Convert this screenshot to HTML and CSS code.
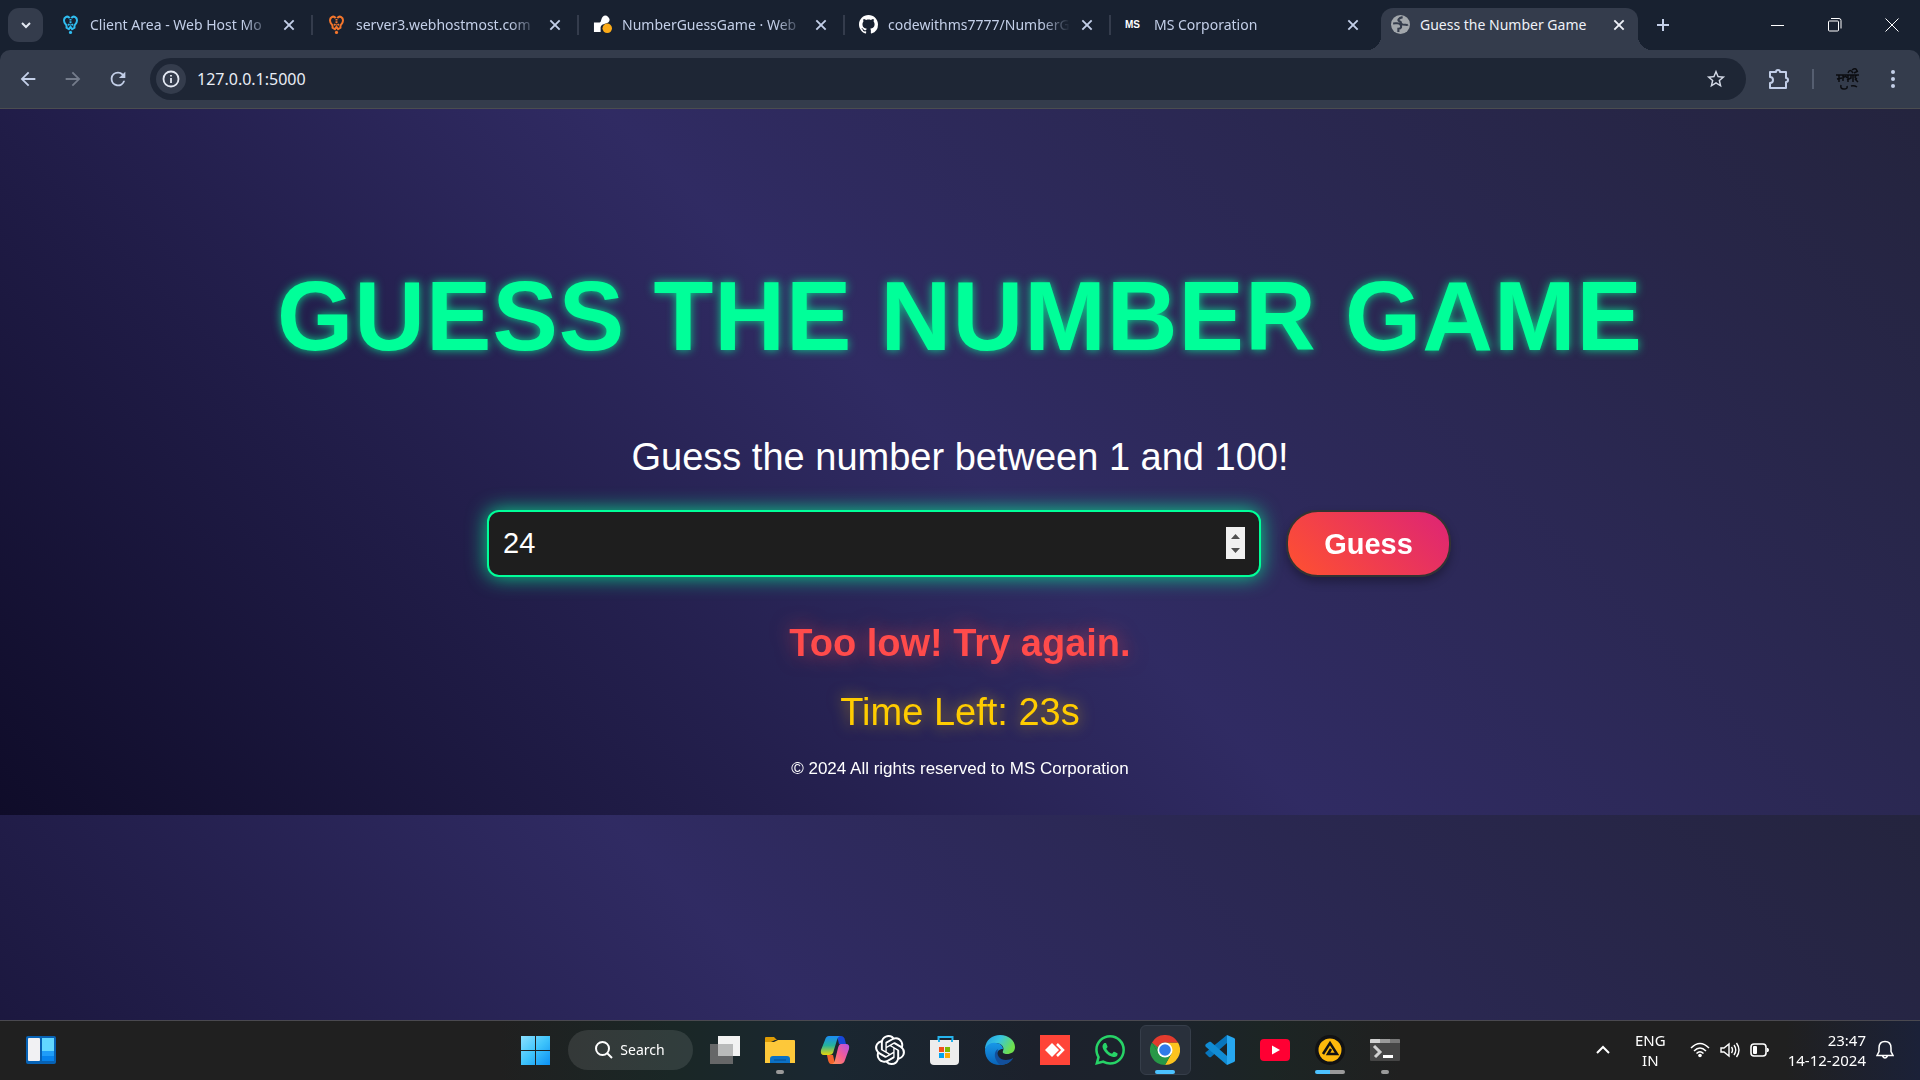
FILE: index.html
```html
<!DOCTYPE html>
<html lang="en">
<head>
<meta charset="utf-8">
<meta name="viewport" content="width=device-width, initial-scale=1">
<title>Guess the Number Game</title>
<link rel="stylesheet" href="styles.css">
</head>
<body>
<div class="desktop">
  <header class="browser">
    <div class="tab-strip">
      <button class="tab-search" type="button" aria-label="Search tabs"><svg width="12" height="12" viewBox="0 0 12 12"><path d="M2 4l4 4 4-4" fill="none" stroke="#e3e8f2" stroke-width="2"/></svg></button>
      <nav class="tabs" aria-label="Open tabs">
        <div class="tab">
          <svg class="favicon cyan" viewBox="0 0 18 24"><g fill="none" stroke="currentColor" stroke-width="2.500"><path d="M8 4C5 0 0 3 1 8c0 3 3 4 3 6v2l3 2 2-3 2 3 3-2v-2c0-2 3-3 3-6 1-5-4-8-7-4"/><path d="M6 13l2-2M12 13l-2-2M9 5v7" stroke-dasharray="2 1"/></g><circle cx="9" cy="22" r="2" fill="currentColor"/></svg>
          <a class="tab-title" href="#client">Client Area - Web Host Mo</a>
          <button class="tab-close" type="button" aria-label="Close tab"><svg viewBox="0 0 12 12"><path d="M2 2l8 8M10 2l-8 8"/></svg></button>
        </div>
        <div class="tab">
          <svg class="favicon orange" viewBox="0 0 18 24"><g fill="none" stroke="currentColor" stroke-width="2.500"><path d="M8 4C5 0 0 3 1 8c0 3 3 4 3 6v2l3 2 2-3 2 3 3-2v-2c0-2 3-3 3-6 1-5-4-8-7-4"/><path d="M6 13l2-2M12 13l-2-2M9 5v7" stroke-dasharray="2 1"/></g><circle cx="9" cy="22" r="2" fill="currentColor"/></svg>
          <a class="tab-title" href="#server">server3.webhostmost.com</a>
          <button class="tab-close" type="button" aria-label="Close tab"><svg viewBox="0 0 12 12"><path d="M2 2l8 8M10 2l-8 8"/></svg></button>
        </div>
        <div class="tab">
          <svg class="favicon" viewBox="0 0 20 20"><path d="M1 8h5c3 0 2-3 4-6a4 4 0 1 1 6 6c-3 2-7 1-8 5v5H1z" fill="#fff"/><circle cx="15" cy="14" r="5" fill="#fbab18"/></svg>
          <a class="tab-title" href="#service">NumberGuessGame · Web</a>
          <button class="tab-close" type="button" aria-label="Close tab"><svg viewBox="0 0 12 12"><path d="M2 2l8 8M10 2l-8 8"/></svg></button>
        </div>
        <div class="tab">
          <svg class="favicon" viewBox="0 0 16 16"><path fill="#fff" d="M8 0C3.58 0 0 3.58 0 8c0 3.54 2.29 6.53 5.47 7.59.4.07.55-.17.55-.38 0-.19-.01-.82-.01-1.49-2.01.37-2.53-.49-2.69-.94-.09-.23-.48-.94-.82-1.13-.28-.15-.68-.52-.01-.53.63-.01 1.08.58 1.23.82.72 1.21 1.87.87 2.33.66.07-.52.28-.87.51-1.07-1.78-.2-3.64-.89-3.64-3.95 0-.87.31-1.59.82-2.15-.08-.2-.36-1.02.08-2.12 0 0 .67-.21 2.2.82.64-.18 1.32-.27 2-.27s1.36.09 2 .27c1.53-1.04 2.2-.82 2.2-.82.44 1.1.16 1.92.08 2.12.51.56.82 1.27.82 2.15 0 3.07-1.87 3.75-3.65 3.95.29.25.54.73.54 1.48 0 1.07-.01 1.93-.01 2.2 0 .21.15.46.55.38A8.01 8.01 0 0 0 16 8c0-4.42-3.58-8-8-8z"/></svg>
          <a class="tab-title" href="#repo">codewithms7777/NumberG</a>
          <button class="tab-close" type="button" aria-label="Close tab"><svg viewBox="0 0 12 12"><path d="M2 2l8 8M10 2l-8 8"/></svg></button>
        </div>
        <div class="tab">
          <span class="favicon ms-mark">MS</span>
          <a class="tab-title" href="#ms">MS Corporation</a>
          <button class="tab-close" type="button" aria-label="Close tab"><svg viewBox="0 0 12 12"><path d="M2 2l8 8M10 2l-8 8"/></svg></button>
        </div>
        <div class="tab active">
          <svg class="favicon" viewBox="0 0 18 18"><circle cx="9" cy="9" r="9" fill="#a2a7ac"/><path d="M11 2c-4 1-5 3-3 4 3 1 0 2 3 3 3 0 4 1 5 0M2 8c3 0 6-1 7 1s1 4-2 4v3" fill="none" stroke="#343c4c" stroke-width="2"/></svg>
          <a class="tab-title" href="#game">Guess the Number Game</a>
          <button class="tab-close" type="button" aria-label="Close tab"><svg viewBox="0 0 12 12"><path d="M2 2l8 8M10 2l-8 8"/></svg></button>
        </div>
      </nav>
      <button class="new-tab" type="button" aria-label="New tab"><svg width="14" height="14" viewBox="0 0 14 14"><path d="M7 1v12M1 7h12" stroke="#c3cfe8" stroke-width="2"/></svg></button>
      <div class="window-controls">
        <button type="button" aria-label="Minimize"><svg width="14" height="14" viewBox="0 0 14 14"><path d="M0 7.5h13" stroke="#fff"/></svg></button>
        <button type="button" aria-label="Restore"><svg width="14" height="14" viewBox="0 0 14 14"><g fill="none" stroke="#fff"><rect x=".5" y="3" width="10" height="10" rx="1"/><path d="M3 .5h8a2 2 0 0 1 2 2v8"/></g></svg></button>
        <button type="button" aria-label="Close"><svg width="14" height="14" viewBox="0 0 14 14"><path d="M.5.5l13 13M13.500 .5l-13 13" stroke="#fff"/></svg></button>
      </div>
    </div>
    <div class="toolbar">
      <div class="nav-buttons">
        <button type="button" aria-label="Back"><svg width="22" height="22" viewBox="0 0 24 24"><path fill="#c3cfe8" d="M20 11H7.83l5.590-5.590L12 4l-8 8 8 8 1.410-1.410L7.830 13H20v-2z"/></svg></button>
        <button type="button" aria-label="Forward" disabled><svg width="22" height="22" viewBox="0 0 24 24"><path fill="#747c8b" d="M4 11h12.170l-5.590-5.590L12 4l8 8-8 8-1.410-1.410L16.170 13H4v-2z"/></svg></button>
        <button type="button" aria-label="Reload"><svg width="22" height="22" viewBox="0 0 24 24"><path fill="#c3cfe8" d="M17.650 6.350A7.960 7.960 0 0 0 12 4a8 8 0 1 0 7.730 10h-2.080A6 6 0 1 1 12 6c1.660 0 3.140.69 4.220 1.780L13 11h7V4l-2.350 2.350z"/></svg></button>
      </div>
      <div class="omnibox">
        <button class="site-info" type="button" aria-label="Site information"><svg width="18" height="18" viewBox="0 0 18 18"><circle cx="9" cy="9" r="7.500" fill="none" stroke="#e3e8f2" stroke-width="1.800"/><path d="M9 8v5M9 5v1.600" stroke="#e3e8f2" stroke-width="1.800"/></svg></button>
        <input class="address" type="text" value="127.0.0.1:5000" aria-label="Address">
        <button class="bookmark" type="button" aria-label="Bookmark"><svg width="22" height="22" viewBox="0 0 24 24"><path fill="#d3d9e6" d="M22 9.240l-7.190-.62L12 2 9.190 8.630 2 9.240l5.460 4.730L5.820 21 12 17.270 18.180 21l-1.630-7.030L22 9.240zM12 15.400l-3.760 2.270 1-4.280-3.320-2.880 4.380-.38L12 6.100l1.710 4.040 4.380.38-3.320 2.880 1 4.280L12 15.400z"/></svg></button>
      </div>
      <div class="toolbar-end">
        <button type="button" aria-label="Extensions"><svg width="22" height="22" viewBox="0 0 22 22"><path d="M2 4h6a2 2 0 0 1 4 0h6v6a2 2 0 0 1 0 4v6H2v-5a3 3 0 0 0 0-6z" fill="none" stroke="#c3cfe8" stroke-width="2" stroke-linejoin="round"/></svg></button>
        <span class="divider"></span>
        <button type="button" aria-label="Profile"><svg width="26" height="24" viewBox="0 0 26 24"><g fill="none" stroke="#0b0c10" stroke-width="1.500"><path d="M1 8h23M4 8v7M2 12l5-1M8 8v6M8 11q3-3 4 0M13 8v7M12 13l4-2v-3M18 8v7M22 8q-4 2 0 4M20 12l3 3M13 6q2-5 5 0M17 3q4-3 5 1M19 6l4-2M6 18q-1 4 3 4t3-3M16 19q3-1 6 1"/></g></svg></button>
        <button type="button" aria-label="Menu"><svg width="6" height="20" viewBox="0 0 6 20"><g fill="#c3cfe8"><circle cx="3" cy="3" r="2"/><circle cx="3" cy="10" r="2"/><circle cx="3" cy="17" r="2"/></g></svg></button>
      </div>
    </div>
  </header>

  <main class="page">
    <h1 class="title">Guess the Number Game</h1>
    <label class="prompt" for="guess">Guess the number between 1 and 100!</label>
    <form class="guess-form">
      <input class="guess-input" id="guess" type="number" min="1" max="100" value="24" autofocus>
      <button class="guess-button" type="button">Guess</button>
    </form>
    <p class="message">Too low! Try again.</p>
    <p class="timer">Time Left: 23s</p>
    <footer class="copyright">© 2024 All rights reserved to MS Corporation</footer>
  </main>

  <footer class="taskbar">
    <div class="task-start">
      <button type="button" aria-label="Widgets"><svg width="30" height="28" viewBox="0 0 30 28"><rect width="30" height="28" rx="2" fill="#0762b5"/><rect x="2" y="2" width="12" height="23" rx="1" fill="#f1f1f3"/><path d="M16 2h12v13H16z" fill="#62d7ff"/><path d="M16 15h12v5H16z" fill="#1f9df8"/><path d="M16 20h12v5H16z" fill="#0783ec"/></svg></button>
    </div>
    <div class="task-apps">
      <button class="app" type="button" aria-label="Start"><svg viewBox="0 0 30 30"><defs><linearGradient id="win" x1="0" y1="0" x2="1" y2="1" ><stop stop-color="#8be0ff"/><stop offset=".5" stop-color="#3fc4fb"/><stop offset="1" stop-color="#0b90f3"/></linearGradient></defs><path fill="url(#win)" d="M1 1h14v14H1zM16 1h14v14H16zM1 16h14v14H1zM16 16h14v14H16z"/></svg></button>
      <button class="search" type="button"><svg width="18" height="18" viewBox="0 0 18 18"><circle cx="7.500" cy="7.500" r="6.500" fill="none" stroke="#fff" stroke-width="2"/><path d="M12 12l5 5" stroke="#fff" stroke-width="2"/></svg>Search</button>
      <button class="app" type="button" aria-label="Task view"><svg viewBox="0 0 30 30"><path d="M0 9h23v20H0z" fill="#666768"/><path d="M8 1h22v20H8z" fill="#f2f2f2"/><path d="M8 9h15v12H8z" fill="#b9baba"/></svg></button>
      <button class="app" type="button" aria-label="File Explorer"><svg viewBox="0 0 30 30"><path d="M0 3a1 1 0 0 1 1-1h8l3 3h-2L0 10z" fill="#dd9b04"/><path d="M0 7h9l4-2h16a1 1 0 0 1 1 1v22H0z" fill="#fdc83a"/><path d="M5 28v-4a3 3 0 0 1 3-3h14a3 3 0 0 1 3 3v4z" fill="#0b71c6"/><path d="M9 25h12" stroke="#064d8e"/></svg><i class="mark"></i></button>
      <button class="app" type="button" aria-label="Copilot"><svg viewBox="0 0 30 30"><defs><linearGradient id="cpa" x1="0" y1="0" x2="0" y2="1"><stop stop-color="#1b8bf5"/><stop offset=".5" stop-color="#26b39b"/><stop offset="1" stop-color="#e9d60b"/></linearGradient><linearGradient id="cpb" x1="1" y1="0" x2="0" y2="1"><stop stop-color="#b052e8"/><stop offset=".5" stop-color="#f45d95"/><stop offset="1" stop-color="#ff9a4d"/></linearGradient></defs><path d="M17 1h4q3 0 4 4l1 4h-7z" fill="#1747d8"/><path d="M9 1h12q-3 0-4 4l-4 13q-1 2-4 2H4q-4 0-3-5L5 5q1-4 4-4z" fill="url(#cpa)"/><path d="M7 20h6l2 9h-4q-2 0-3-4z" fill="#f3642c"/><path d="M21 9h5q4 0 3 5l-4 11q-1 4-5 4h-9q3 0 4-4l3-12q1-4 3-4z" fill="url(#cpb)"/></svg></button>
      <button class="app" type="button" aria-label="ChatGPT"><svg viewBox="0 0 24 24"><path fill="#fff" d="M22.2819 9.8211a5.9847 5.9847 0 0 0-.5157-4.9108 6.0462 6.0462 0 0 0-6.5098-2.9A6.0651 6.0651 0 0 0 4.9807 4.1818a5.9847 5.9847 0 0 0-3.9977 2.9 6.0462 6.0462 0 0 0 .7427 7.0966 5.98 5.98 0 0 0 .511 4.9107 6.051 6.051 0 0 0 6.5146 2.9001A5.9847 5.9847 0 0 0 13.2599 24a6.0557 6.0557 0 0 0 5.7718-4.2058 5.9894 5.9894 0 0 0 3.9977-2.9001 6.0557 6.0557 0 0 0-.7475-7.0729zm-9.022 12.6081a4.4755 4.4755 0 0 1-2.8764-1.0408l.1419-.0804 4.7783-2.7582a.7948.7948 0 0 0 .3927-.6813v-6.7369l2.02 1.1686a.071.071 0 0 1 .038.052v5.5826a4.504 4.504 0 0 1-4.4945 4.4944zm-9.6607-4.1254a4.4708 4.4708 0 0 1-.5346-3.0137l.142.0852 4.783 2.7582a.7712.7712 0 0 0 .7806 0l5.8428-3.3685v2.3324a.0804.0804 0 0 1-.0332.0615L9.74 19.9502a4.4992 4.4992 0 0 1-6.1408-1.6464zM2.3408 7.8956a4.485 4.485 0 0 1 2.3655-1.9728V11.6a.7664.7664 0 0 0 .3879.6765l5.8144 3.3543-2.0201 1.1685a.0757.0757 0 0 1-.071 0l-4.8303-2.7865A4.504 4.504 0 0 1 2.3408 7.872zm16.5963 3.8558L13.1038 8.364 15.1192 7.2a.0757.0757 0 0 1 .071 0l4.8303 2.7913a4.4944 4.4944 0 0 1-.6765 8.1042v-5.6772a.79.79 0 0 0-.407-.667zm2.0107-3.0231l-.142-.0852-4.7735-2.7818a.7759.7759 0 0 0-.7854 0L9.409 9.2297V6.8974a.0662.0662 0 0 1 .0284-.0615l4.8303-2.7866a4.4992 4.4992 0 0 1 6.6802 4.66zM8.3065 12.863l-2.02-1.1638a.0804.0804 0 0 1-.038-.0567V6.0742a4.4992 4.4992 0 0 1 7.3757-3.4537l-.142.0805L8.704 5.459a.7948.7948 0 0 0-.3927.6813zm1.0976-2.3654l2.602-1.4998 2.6069 1.4998v2.9994l-2.5974 1.4997-2.6067-1.4997Z"/></svg></button>
      <button class="app" type="button" aria-label="Microsoft Store"><svg viewBox="0 0 30 30"><path d="M8.500 8V2h14v6" fill="none" stroke="#25b4ee" stroke-width="2"/><path d="M0 5h29v21a4 4 0 0 1-4 4H4a4 4 0 0 1-4-4z" fill="#ededed"/><path d="M8 5h2v2H8zM21 5h2v2h-2z" fill="#25b4ee"/><path d="M9 12h5v5H9z" fill="#f1511b"/><path d="M15 12h5v5h-5z" fill="#80b900"/><path d="M9 18h5v5H9z" fill="#00a3ef"/><path d="M15 18h5v5h-5z" fill="#fbab09"/></svg></button>
      <button class="app" type="button" aria-label="Edge"><svg viewBox="0 0 30 30"><defs><linearGradient id="eda" x1="0" y1="0" x2="1" y2=".4"><stop stop-color="#1f9be6"/><stop offset=".5" stop-color="#38c5e0"/><stop offset="1" stop-color="#6fe04d"/></linearGradient><linearGradient id="edb" x1="0" y1="0" x2="0" y2="1"><stop stop-color="#1898e8"/><stop offset="1" stop-color="#0963b8"/></linearGradient></defs><path d="M0 13C1 5 7 0 15 0c9 0 15 6 15 12 0 5-4 7-8 7-3 0-5-1-4-3 2-4-2-8-7-8-6 0-10 4-11 7z" fill="url(#eda)"/><path d="M0 15C1 10 6 7 11 8c4 0 7 3 7 6-8 0-8 10 1 12 3 1 7-1 9-3-3 5-8 7-13 7C6 30 0 24 0 15z" fill="url(#edb)"/><path d="M13 14c-5 3-4 11 2 16 6 0 11-3 13-7-9 5-18 0-15-9z" fill="#134f9b"/></svg></button>
      <button class="app" type="button" aria-label="AnyDesk"><svg viewBox="0 0 30 30"><path fill="#ff4438" d="M0 0h30v30H0z"/><path d="M12 8l7 7-7 7-7-7z" fill="#fff"/><path d="M17 9l6 6-6 6" fill="none" stroke="#fff" stroke-width="2.500"/></svg></button>
      <button class="app" type="button" aria-label="WhatsApp"><svg viewBox="0 0 24 24"><path fill="#27d367" d="M17.472 14.382c-.297-.149-1.758-.867-2.03-.967-.273-.099-.471-.148-.67.15-.197.297-.767.966-.94 1.164-.173.199-.347.223-.644.075-.297-.15-1.255-.463-2.39-1.475-.883-.788-1.48-1.761-1.653-2.059-.173-.297-.018-.458.13-.606.134-.133.298-.347.446-.52.149-.174.198-.298.298-.497.099-.198.05-.371-.025-.52-.075-.149-.669-1.612-.916-2.207-.242-.579-.487-.5-.669-.51-.173-.008-.371-.01-.57-.01-.198 0-.52.074-.792.372-.272.297-1.04 1.016-1.04 2.479 0 1.462 1.065 2.875 1.213 3.074.149.198 2.096 3.2 5.077 4.487.709.306 1.262.489 1.694.625.712.227 1.36.195 1.871.118.571-.085 1.758-.719 2.006-1.413.248-.694.248-1.289.173-1.413-.074-.124-.272-.198-.57-.347m-5.421 7.403h-.004a9.87 9.87 0 01-5.031-1.378l-.361-.214-3.741.982.998-3.648-.235-.374a9.86 9.86 0 01-1.51-5.26c.001-5.45 4.436-9.884 9.888-9.884 2.64 0 5.122 1.03 6.988 2.898a9.825 9.825 0 012.893 6.994c-.003 5.45-4.437 9.884-9.885 9.884m8.413-18.297A11.815 11.815 0 0012.05 0C5.495 0 .16 5.335.157 11.892c0 2.096.547 4.142 1.588 5.945L.057 24l6.305-1.654a11.882 11.882 0 005.683 1.448h.005c6.554 0 11.89-5.335 11.893-11.893a11.821 11.821 0 00-3.48-8.413z"/></svg></button>
      <button class="app current" type="button" aria-label="Chrome"><svg viewBox="0 0 30 30"><path d="M28 7.500A15 15 0 0 1 15 30l6.500-11.500L15 7.500z" fill="#fcc31e"/><path d="M2 7.500A15 15 0 0 0 15 30l6.500-11.500h-13z" fill="#279847"/><path d="M2 7.500l6.500 11L15 15V7.500z" fill="#279847"/><path d="M2 7.500A15 15 0 0 1 28 7.500H15a7.500 7.500 0 0 0-7 5z" fill="#e33b2e"/><circle cx="15" cy="15" r="7.500" fill="#fff"/><circle cx="15" cy="15" r="5.800" fill="#2f7bea"/></svg><i class="mark wide"></i></button>
      <button class="app" type="button" aria-label="Visual Studio Code"><svg viewBox="0 0 30 30"><path d="M1 19l3 3c1 .5 1.500.3 2 0L22 8V0L1 17c-1 1-1 1 0 2z" fill="#0876bd"/><path d="M1 9l3-2c1-.5 1.500-.3 2 0l16 14v9L1 12c-1-1-1-2 0-3z" fill="#118cd4"/><path d="M22 0l7 3c1 .5 1 1 1 2v20c0 1 0 1.500-1 2l-7 3z" fill="#27a7f0"/></svg></button>
      <button class="app" type="button" aria-label="YouTube"><svg viewBox="0 0 30 30"><rect y="4" width="30" height="22" rx="4" fill="#ff0033"/><path d="M12 10.500v9l8-4.500z" fill="#fff"/></svg></button>
      <button class="app" type="button" aria-label="Audio app"><svg viewBox="0 0 30 30"><circle cx="15" cy="15" r="15" fill="#111214"/><circle cx="15" cy="15" r="11.500" fill="#fdb90c"/><path d="M8 19l7-11 7 11h-9l3-5" fill="none" stroke="#111214" stroke-width="2.500"/></svg><i class="mark split"></i></button>
      <button class="app" type="button" aria-label="Terminal"><svg viewBox="0 0 30 30"><rect y="4" width="30" height="22" rx="1" fill="#454545"/><path d="M0 8V5a1 1 0 0 1 1-1h9v4z" fill="#d0d0d0"/><path d="M10 4h10v4H10z" fill="#9b9b9b"/><path d="M20 4h9a1 1 0 0 1 1 1v3H20z" fill="#777"/><path d="M4 11l6 6-5 5" fill="none" stroke="#cfcfcf" stroke-width="3"/><path d="M13 21.500h10" stroke="#fff" stroke-width="3"/></svg><i class="mark"></i></button>
    </div>
    <div class="tray">
      <button type="button" aria-label="Show hidden icons"><svg width="14" height="10" viewBox="0 0 14 10"><path d="M1 8l6-6 6 6" fill="none" stroke="#fff" stroke-width="2"/></svg></button>
      <span class="language">ENG<br>IN</span>
      <span class="status">
        <svg width="20" height="20" viewBox="0 0 20 20"><g fill="none" stroke="#fff" stroke-width="1.500"><path d="M1 8q9-9 18 0M4 11q6-6 12 0M6.500 13.500q3.500-3.500 7 0"/></g><circle cx="10" cy="15.500" r="1.800" fill="#fff"/></svg>
        <svg width="20" height="20" viewBox="0 0 20 20"><g fill="none" stroke="#fff" stroke-width="1.400"><path d="M1 8v4h3l5 4V4L4 8zM11.500 7q2 3 0 6M14 5q3.500 5 0 10M16.500 3q5 7 0 14"/></g></svg>
        <svg width="20" height="20" viewBox="0 0 20 20"><rect x="1" y="4" width="15" height="12" rx="3" fill="none" stroke="#fff" stroke-width="1.600"/><rect x="3" y="6" width="4" height="8" rx="1" fill="#fff"/><path d="M17 8h1q2 2 0 4h-1z" fill="#fff"/></svg>
      </span>
      <time class="clock" datetime="2024-12-14T23:47">23:47<br>14-12-2024</time>
      <button type="button" aria-label="Notifications"><svg width="18" height="20" viewBox="0 0 18 20"><g fill="none" stroke="#fff" stroke-width="1.500"><path d="M1 15.500l2-4V8q0-6.500 6-6.500T15 8v3.500l2 4zM6.500 16q2.500 4 5 0"/></g></svg></button>
    </div>
  </footer>
</div>
</body>
</html>
```
FILE: styles.css
```css
* { box-sizing: border-box; }
body { margin: 0; font-family: "Liberation Sans", Arial, sans-serif; color: #fff; }
button { margin: 0; padding: 0; border: 0; background: none; color: inherit; font: inherit; display: flex; align-items: center; justify-content: center; }
svg { display: block; flex: none; }
.desktop { display: flex; flex-direction: column; min-height: 100vh; }

/* Browser chrome */
.browser { font-family: "Noto Sans", "Open Sans", sans-serif; background: #182130; border-bottom: 1px solid #4b4d50; }
.tab-strip { display: flex; align-items: center; height: 50px; padding-left: 8px; }
.tab-search { width: 35px; height: 34px; border-radius: 11px; background: #343c4c; flex: none; }
.tabs { display: flex; flex: 0 1 1592px; min-width: 0; height: 50px; margin-left: 3px; }
.tab { position: relative; display: flex; align-items: center; flex: 1 1 0; min-width: 0; height: 42px; margin-top: 8px; padding: 0 16px 9px 15px; color: #c3cfe8; }
.tab::after { content: ""; position: absolute; right: -1px; top: 7px; width: 2px; height: 20px; background: #343c4c; }
.tab.active { flex: 0 0 257px; margin-left: 5px; padding: 0 12px 9px 10px; background: #343c4c; border-radius: 12px 12px 0 0; color: #eef1f8; }
.tab:nth-last-child(2)::after { display: none; }
.tab.active::before, .tab.active::after { content: ""; position: absolute; top: auto; bottom: 0; width: 14px; height: 14px; }
.tab.active::before { left: -14px; background: radial-gradient(circle at 0 0, #182130 14px, #343c4c 14px); }
.tab.active::after { right: -14px; background: radial-gradient(circle at 100% 0, #182130 14px, #343c4c 14px); }
.favicon { width: 19px; height: 19px; flex: none; }
.cyan { color: #30bdf0; }
.orange { color: #f4762c; }
.ms-mark { color: #fff; font: bold 10px/19px "Liberation Sans", Arial, sans-serif; }
.tab-title { flex: 1; min-width: 0; margin: 0 10px; overflow: hidden; white-space: nowrap; color: inherit; text-decoration: none; font-size: 14px; line-height: 20px; mask-image: linear-gradient(to right, #000 calc(100% - 28px), transparent); }
.active .tab-title { mask-image: none; }
.tab-close svg { width: 14px; height: 14px; fill: none; stroke: currentColor; stroke-width: 1.6; }
.new-tab { width: 50px; height: 34px; flex: none; }
.window-controls { display: flex; margin-left: auto; }
.window-controls button { width: 57px; height: 50px; }
.toolbar { display: flex; align-items: center; gap: 10px; height: 58px; padding-right: 5px; background: #343c4c; border-radius: 10px 10px 0 0; }
.nav-buttons { display: flex; padding-left: 5px; }
.nav-buttons button { width: 45px; height: 42px; }
.omnibox { flex: 1; display: flex; align-items: center; height: 42px; padding: 0 19px 0 6px; border-radius: 21px; background: #1e2635; }
.site-info { width: 30px; height: 30px; border-radius: 50%; background: #343c4c; }
.address { flex: 1; min-width: 0; margin-left: 11px; padding: 0; border: 0; outline: 0; background: none; color: #e9edf5; font: 16px/24px "Noto Sans", "Open Sans", sans-serif; }
.toolbar-end { display: flex; align-items: center; }
.toolbar-end button { width: 45px; height: 42px; }
.divider { width: 2px; height: 20px; margin: 0 11px; background: #555e70; }

/* Game page */
.page { flex: 1; display: flex; flex-direction: column; align-items: center; padding: 152px 24px 36px; background: linear-gradient(45deg, #0f0c29, #302b63, #24243e) 0 0 / 100% 706px; }
.page p { margin: 0; }
.title { margin: 0 0 64px; font-size: 98px; line-height: 110px; letter-spacing: 1px; text-transform: uppercase; text-align: center; color: #00ff99; text-shadow: 0 0 10px rgba(0, 255, 153, 0.8); }
.prompt { font-size: 38px; line-height: 44px; }
.guess-form { display: flex; justify-content: center; gap: 25px; width: 100%; margin: 31px 0 44px; padding-left: 18px; }
.guess-input { width: 774px; min-width: 0; height: 67px; padding: 0 14px; border: 2px solid #00ff99; border-radius: 12px; outline: 0; background: #1e1e1e; color: #fff; caret-color: #fff; caret-animation: manual; font: 29px/34px "Liberation Sans", Arial, sans-serif; box-shadow: 0 0 20px rgba(0, 255, 153, 0.8); }
.guess-input::-webkit-inner-spin-button { appearance: none; width: 19px; height: 32px; opacity: 1; background: #f1f1f1 url("data:image/svg+xml,%3Csvg xmlns='http://www.w3.org/2000/svg' viewBox='0 0 19 32'%3E%3Cpath d='M5 12l4.500-5 4.500 5zM5 21l4.500 5 4.500-5z' fill='%23505050'/%3E%3C/svg%3E") center / 19px 32px no-repeat; }
.guess-button { width: 165px; height: 67px; border: 2px solid #333; border-radius: 32px; background: linear-gradient(45deg, #ff512f, #dd2476); font: bold 29px/34px "Liberation Sans", Arial, sans-serif; box-shadow: 0 5px 10px rgba(0, 0, 0, 0.3); }
.message { font-size: 38px; line-height: 44px; font-weight: bold; color: #ff4b4b; text-shadow: 0 0 20px rgba(255, 75, 75, 0.6); }
.timer { font-size: 38px; line-height: 44px; color: #ffcc00; text-shadow: 0 0 15px rgba(255, 204, 0, 0.6); }
.page .timer { margin: 25px 0; }
.copyright { font-size: 17px; line-height: 20px; }

/* Taskbar */
.taskbar { display: grid; grid-template-columns: 1fr auto 1fr; align-items: center; height: 60px; padding-bottom: 2px; border-top: 1px solid #4a4950; font-family: "Noto Sans", "Open Sans", sans-serif; background: linear-gradient(to right, #202020 26%, #1a2726 35%, #1a2731 43%, #1c212c 54%, #1c232c 61%, #1c2524 66%, #202020 73%, #202020 93%, #1b2138); }
.task-start { display: flex; padding-left: 26px; }
.task-apps { display: flex; align-items: center; }
.app { position: relative; width: 55px; height: 50px; }
.app svg { width: 30px; height: 30px; }
.current { width: 51px; margin: 0 2px; border: 1px solid #363e4a; border-radius: 6px; background: #29303b; }
.mark { position: absolute; left: 50%; bottom: 1px; width: 8px; height: 4px; margin-left: -4px; border-radius: 2px; background: #9a9a9a; }
.mark.wide { bottom: 0; width: 20px; margin-left: -10px; background: #4cc2ff; }
.mark.split { width: 30px; margin-left: -15px; background: linear-gradient(to right, #4cc2ff 50%, #9a9a9a 50%); }
.search { gap: 7px; width: 125px; height: 40px; margin: 0 5px; border-radius: 20px; background: rgba(255, 255, 255, 0.1); font-size: 14px; }
.tray { display: flex; align-items: center; justify-content: flex-end; padding-right: 26px; font-size: 15px; line-height: 20px; }
.language { margin: 0 24px 0 25px; text-align: center; }
.status { display: flex; gap: 10px; }
.clock { margin: 0 10px 0 18px; text-align: right; }
```
